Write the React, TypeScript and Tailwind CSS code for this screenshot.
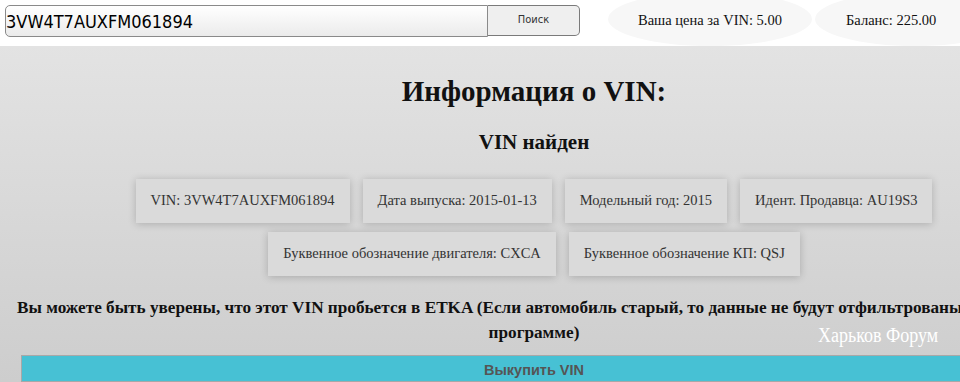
export default function App() {
  const row1 = [
    "VIN: 3VW4T7AUXFM061894",
    "Дата выпуска: 2015-01-13",
    "Модельный год: 2015",
    "Идент. Продавца: AU19S3",
  ];
  const row2 = [
    "Буквенное обозначение двигателя: CXCA",
    "Буквенное обозначение КП: QSJ",
  ];
  const card =
    "h-[44px] px-[15px] flex items-center bg-[#dadada] text-[#333] text-[14.5px] shadow-[0_1px_8px_rgba(0,0,0,0.2)] whitespace-nowrap";
  return (
    <div className="relative w-[960px] h-[382px] overflow-hidden bg-[#cccccc] font-['Liberation_Serif',serif]">
      <header className="h-[46px] bg-white flex items-start">
        <div className="ml-[5px] mt-[5px] flex items-start shrink-0">
          <input
            readOnly
            defaultValue="3VW4T7AUXFM061894"
            className="w-[483px] h-[32px] border border-[#8a8a8a] rounded-l-[5px] bg-linear-to-b from-white to-[#ebebeb] pl-[0px] text-[18px] text-black font-['DejaVu_Sans_Condensed','DejaVu_Sans',sans-serif] outline-none"
          />
          <button className="w-[92px] h-[31px] border border-l-0 border-[#7a7a7a] rounded-r-[5px] bg-[#efefef] text-[11px] text-[#333] font-['DejaVu_Sans_Condensed','DejaVu_Sans',sans-serif]">
            Поиск
          </button>
        </div>
        <div className="ml-[28px] -mt-[8px] w-[204px] h-[54px] shrink-0 rounded-[50%] bg-[#f7f7f7] flex items-center justify-center pt-[4px] text-[14.5px] text-[#111] whitespace-nowrap">
          Ваша цена за VIN: 5.00
        </div>
        <div className="ml-[3px] -mt-[8px] w-[200px] h-[54px] shrink-0 rounded-[50%] bg-[#f7f7f7] flex items-center pl-[31px] pt-[4px] text-[14.5px] text-[#111] whitespace-nowrap">
          Баланс: 225.00
        </div>
      </header>
      <main className="h-[336px] w-[1068px] bg-linear-to-b from-[#e3e3e3] to-[#cdcdcd] flex flex-col">
        <h1 className="mt-[30px] text-center text-[29px] leading-[31px] font-bold text-[#111]">
          Информация о VIN:
        </h1>
        <h3 className="mt-[24px] text-center text-[21px] leading-[23px] font-bold text-[#111]">
          VIN найден
        </h3>
        <div className="mt-[25px] flex justify-center gap-x-[13px]">
          {row1.map((t) => (
            <div key={t} className={card}>
              {t}
            </div>
          ))}
        </div>
        <div className="mt-[9px] flex justify-center gap-x-[13px]">
          {row2.map((t) => (
            <div key={t} className={card}>
              {t}
            </div>
          ))}
        </div>
        <div className="mt-[19px] text-[17.2px] leading-[25px] font-bold text-[#111] whitespace-nowrap">
          <p className="pl-[17px]">
            Вы можете быть уверены, что этот VIN пробьется в ETKA (Если автомобиль старый, то данные не будут отфильтрованы в
          </p>
          <p className="text-center">программе)</p>
        </div>
        <button className="mt-[10px] mx-[21px] h-[40px] border border-[#a8a8a8] bg-[#47c1d4] flex justify-center pt-[6px] text-[14.5px] leading-[17px] font-bold text-[#555] font-['Liberation_Sans',Arial,sans-serif]">
          Выкупить VIN
        </button>
      </main>
      <div className="absolute left-[818px] top-[322px] text-[20px] leading-[26px] text-white font-['Liberation_Serif',serif] scale-x-[0.9] origin-left whitespace-nowrap">
        Харьков Форум
      </div>
    </div>
  );
}
